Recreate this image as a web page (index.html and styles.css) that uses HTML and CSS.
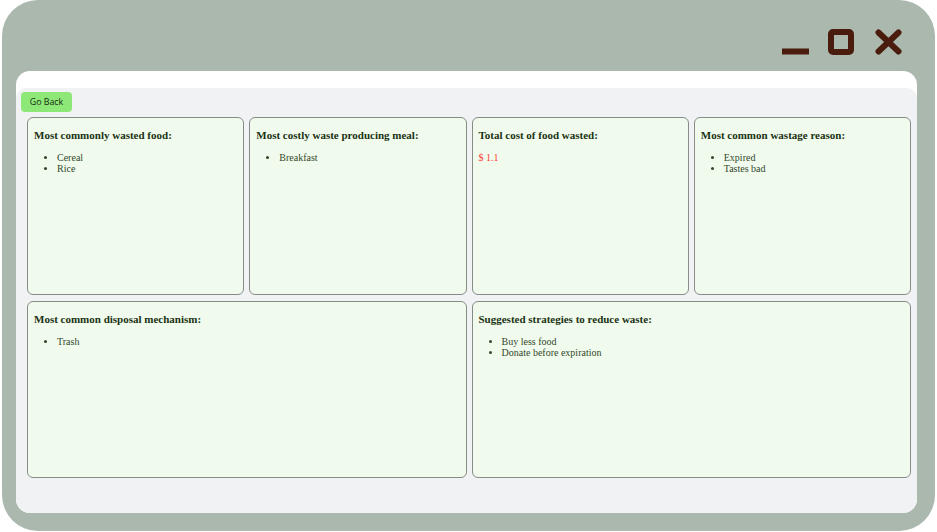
FILE: index.html
```html
<!DOCTYPE html>
<html>
<head>
<meta charset="utf-8">
<link rel="stylesheet" href="styles.css">
</head>
<body>
<div class="frame">
  <div class="titlebar">
    <svg class="ctl ctl-min" width="27" height="26" viewBox="0 0 27 26"><rect x="0" y="19.5" width="27" height="6" fill="#4a1c0e"/></svg>
    <svg class="ctl ctl-max" width="26" height="26" viewBox="0 0 26 26"><rect x="3" y="3" width="20" height="20" rx="2" fill="none" stroke="#4a1c0e" stroke-width="6"/></svg>
    <svg class="ctl ctl-close" width="27" height="26" viewBox="0 0 27 26"><path d="M3.5 3.5 L23.5 22.5 M23.5 3.5 L3.5 22.5" stroke="#4a1c0e" stroke-width="6" stroke-linecap="round"/></svg>
  </div>
  <div class="panel">
    <div class="content">
      <button class="back">Go Back</button>
      <div class="grid">
        <div class="card">
          <h3>Most commonly wasted food:</h3>
          <ul><li>Cereal</li><li>Rice</li></ul>
        </div>
        <div class="card">
          <h3>Most costly waste producing meal:</h3>
          <ul><li>Breakfast</li></ul>
        </div>
        <div class="card">
          <h3>Total cost of food wasted:</h3>
          <p class="cost">$ 1.1</p>
        </div>
        <div class="card">
          <h3>Most common wastage reason:</h3>
          <ul><li>Expired</li><li>Tastes bad</li></ul>
        </div>
        <div class="card wide">
          <h3>Most common disposal mechanism:</h3>
          <ul><li>Trash</li></ul>
        </div>
        <div class="card wide">
          <h3>Suggested strategies to reduce waste:</h3>
          <ul><li>Buy less food</li><li>Donate before expiration</li></ul>
        </div>
      </div>
    </div>
  </div>
</div>
</body>
</html>
```

FILE: styles.css
```css
html, body {
  margin: 0;
  padding: 0;
  background: #ffffff;
}
body {
  width: 937px;
  height: 532px;
  overflow: hidden;
}
.frame {
  margin-left: 2px;
  width: 933px;
  height: 531px;
  background: #aab8ae;
  border-radius: 36px;
  box-sizing: border-box;
  padding: 0 18px 0 14px;
  display: flex;
  flex-direction: column;
}
.titlebar {
  height: 71px;
  box-sizing: border-box;
  padding-top: 29px;
  padding-right: 15px;
  display: flex;
  justify-content: flex-end;
  align-items: flex-start;
}
.ctl { display: block; }
.ctl-min { margin-right: 19px; }
.ctl-max { margin-right: 21px; }
.panel {
  height: 442px;
  background: #ffffff;
  border-radius: 14px;
  padding-top: 17px;
  box-sizing: border-box;
  overflow: hidden;
}
.content {
  height: 100%;
  background: #f1f2f4;
  border-radius: 10px 10px 0 0;
  box-sizing: border-box;
  padding: 4px 5px 0 5px;
}
.back {
  display: block;
  width: 51px;
  height: 20px;
  padding: 0;
  border: none;
  border-radius: 4px;
  background: #8ee878;
  color: #15280f;
  font-family: "Open Sans", "Noto Sans", sans-serif;
  font-size: 8.8px;
  cursor: pointer;
}
.grid {
  margin: 5px 0 0 6px;
  width: 884px;
  display: grid;
  grid-template-columns: repeat(4, 1fr);
  grid-template-rows: 178px 177px;
  gap: 6px 5px;
}
.card {
  background: #f0fbee;
  border: 1px solid #878c88;
  border-radius: 6px;
  padding: 6px 6px;
  box-sizing: border-box;
  font-family: "Liberation Serif", "Times New Roman", serif;
}
.wide { grid-column: span 2; }
.card h3 {
  margin: 5px 0 0 0;
  font-size: 11px;
  line-height: 13px;
  font-weight: bold;
  color: #1b3212;
}
.card ul {
  margin: 10px 0 0 0;
  padding-left: 23px;
  font-size: 10px;
  line-height: 11px;
  color: #34482a;
}
.cost {
  margin: 10px 0 0 0;
  font-size: 10px;
  line-height: 11px;
  color: #ff3a3a;
}
```
